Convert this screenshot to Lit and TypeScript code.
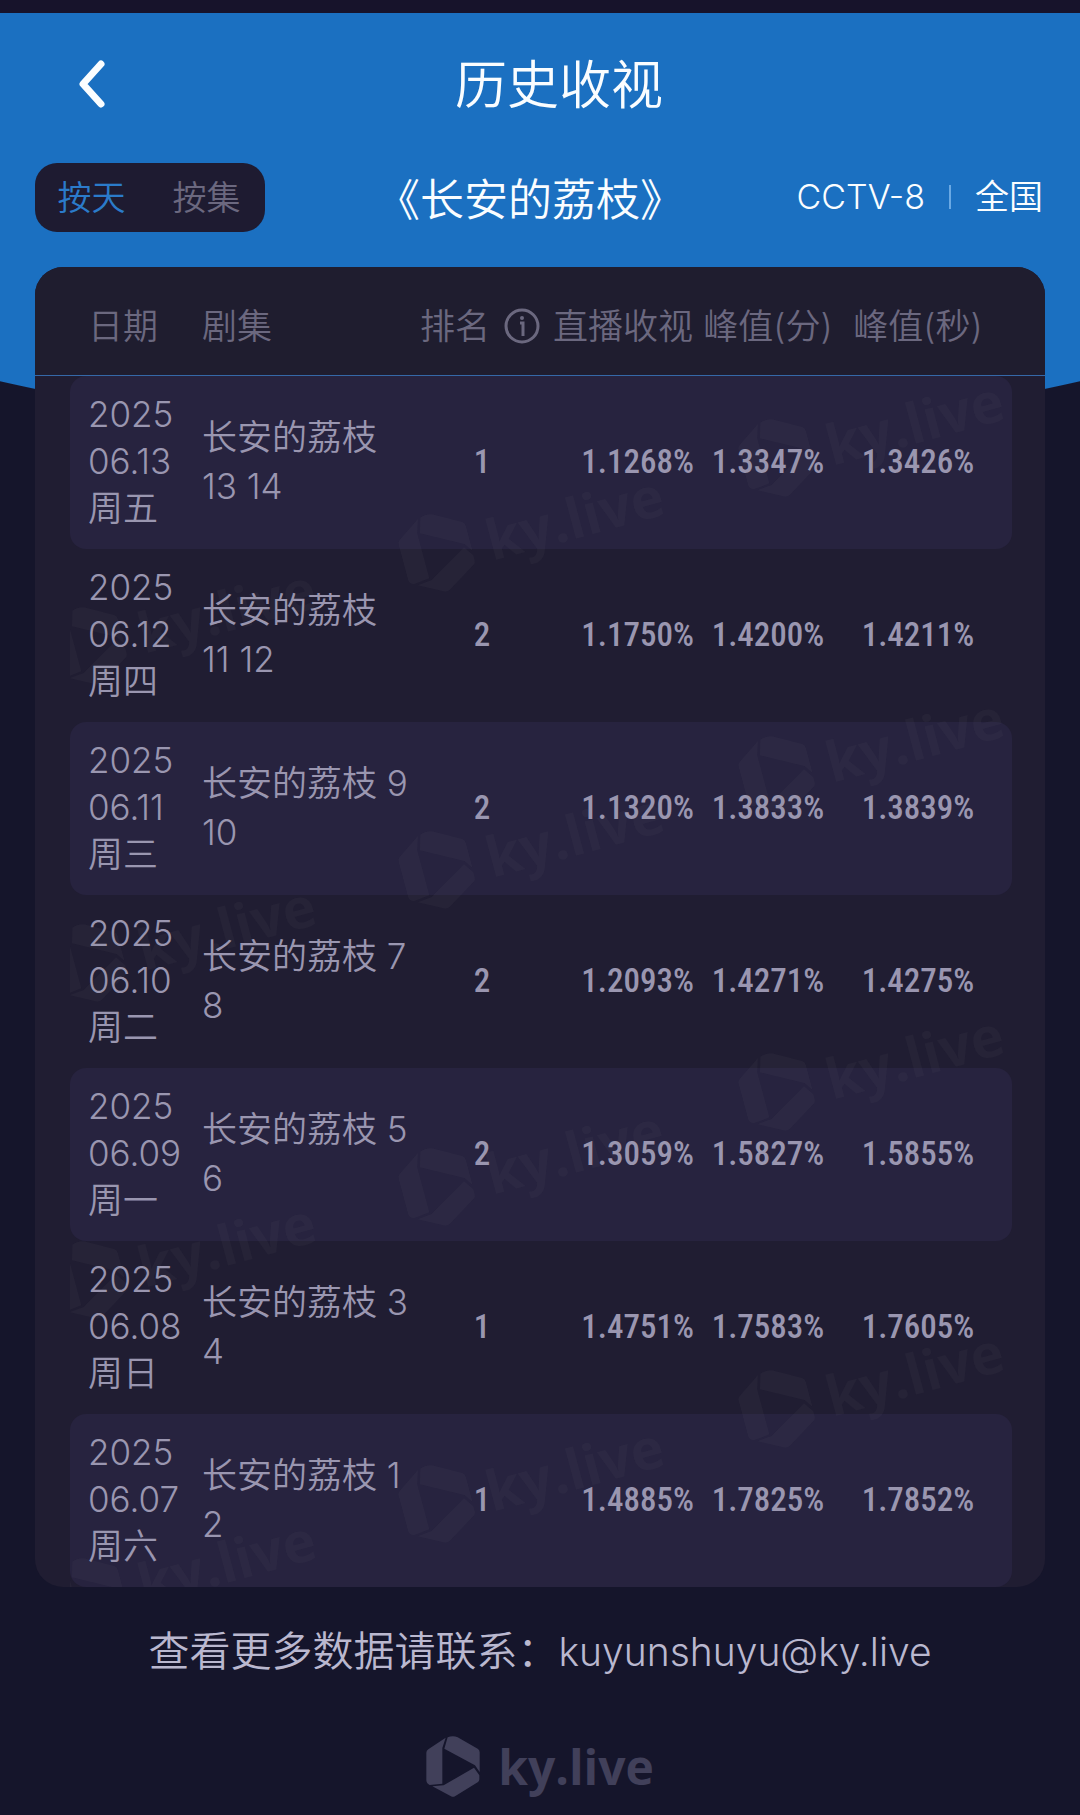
import { LitElement, html, css } from "lit";
import { customElement, property, state } from "lit/decorators.js";
import { classMap } from "lit/directives/class-map.js";
import { styleMap } from "lit/directives/style-map.js";

interface Rating {
  year: string;
  day: string;
  week: string;
  episodes: string;
  rank: number;
  live: string;
  peakMinute: string;
  peakSecond: string;
}

const RATINGS: Rating[] = [
  { year: "2025", day: "06.13", week: "周五", episodes: "13 14", rank: 1, live: "1.1268%", peakMinute: "1.3347%", peakSecond: "1.3426%" },
  { year: "2025", day: "06.12", week: "周四", episodes: "11 12", rank: 2, live: "1.1750%", peakMinute: "1.4200%", peakSecond: "1.4211%" },
  { year: "2025", day: "06.11", week: "周三", episodes: "9 10", rank: 2, live: "1.1320%", peakMinute: "1.3833%", peakSecond: "1.3839%" },
  { year: "2025", day: "06.10", week: "周二", episodes: "7 8", rank: 2, live: "1.2093%", peakMinute: "1.4271%", peakSecond: "1.4275%" },
  { year: "2025", day: "06.09", week: "周一", episodes: "5 6", rank: 2, live: "1.3059%", peakMinute: "1.5827%", peakSecond: "1.5855%" },
  { year: "2025", day: "06.08", week: "周日", episodes: "3 4", rank: 1, live: "1.4751%", peakMinute: "1.7583%", peakSecond: "1.7605%" },
  { year: "2025", day: "06.07", week: "周六", episodes: "1 2", rank: 1, live: "1.4885%", peakMinute: "1.7825%", peakSecond: "1.7852%" },
];

const MARK_STEP = 317;
const MARKS = [
  { left: 2, top: 270 },
  { left: 39, top: 177 },
  { left: 75, top: 82 },
].flatMap((m) => [0, 1, 2, 3].map((i) => ({ left: m.left, top: m.top + i * MARK_STEP })));

@customElement("ky-logo")
export class KyLogo extends LitElement {
  static styles = css`
    :host {
      display: inline-flex;
      align-items: center;
      gap: 18px;
      color: #41405a;
      font: 700 48px/60px "Open Sans", "Noto Sans", sans-serif;
    }
    .mark {
      display: block;
      width: var(--mark-width, 54px);
      height: var(--mark-height, 61px);
      fill: currentColor;
    }
  `;

  render() {
    return html`
      <svg class="mark" viewBox="0 0 160 183" aria-hidden="true">
        <path d="M6 40 58 5 48 36V143L10 147Q0 142 0 132V50Q0 44 6 40Z" />
        <path d="M64 4Q80-3 94 4L154 38Q160 42 160 49V108L146 88 54 38Z" />
        <path d="M18 151 52 148 143 95 159 118V130Q159 136 154 139L86 181Q80 184 74 181Z" />
      </svg>
      <span>ky.live</span>
    `;
  }
}

@customElement("rating-table")
export class RatingTable extends LitElement {
  @property({ attribute: false }) rows: Rating[] = [];
  @property() show = "";

  static styles = css`
    :host {
      display: block;
      position: relative;
      overflow: hidden;
      border-radius: 28px;
      background: #201d32;
      color: #9a96b0;
      font-size: 35px;
    }
    table,
    thead,
    tbody {
      display: block;
    }
    tr {
      display: grid;
      grid-template-columns: 114fr 210fr 140fr 142fr 148fr 152fr;
      align-items: center;
      padding: 0 18px;
    }
    th,
    td {
      padding: 0;
      text-align: left;
      font-weight: inherit;
    }
    thead {
      padding: 10px 33px 0 35px;
      border-bottom: 1px solid #3568a8;
      background: #1f1d2f;
      color: #6b687f;
    }
    thead tr {
      height: 98px;
    }
    thead th {
      line-height: 49px;
      white-space: nowrap;
    }
    tbody {
      padding: 0 33px 0 35px;
    }
    tbody tr {
      box-sizing: border-box;
      min-height: 173px;
      padding-bottom: 2px;
      border-radius: 16px;
    }
    tbody tr:nth-child(odd) {
      background: #27233f;
    }
    .date {
      line-height: 47px;
    }
    .date span {
      display: block;
    }
    .episodes {
      line-height: 49px;
    }
    .number {
      line-height: 49px;
      text-align: center;
    }
    td.number {
      font-family: "Roboto Condensed", "Liberation Sans Narrow", Roboto, sans-serif;
      font-size: 33px;
      font-weight: 500;
    }
    td.live {
      text-align: right;
    }
    .rank-head {
      display: flex;
      align-items: center;
      justify-content: center;
      gap: 14px;
      padding-right: 4px;
    }
    .info {
      display: flex;
      padding: 0;
      border: 0;
      background: none;
      color: inherit;
    }
    .info svg {
      width: 36px;
      height: 36px;
    }
    .watermarks {
      position: absolute;
      inset: 109px 33px 0 35px;
      overflow: hidden;
      pointer-events: none;
    }
    .watermarks ky-logo {
      --mark-width: 70px;
      --mark-height: 80px;
      position: absolute;
      gap: 16px;
      color: rgba(140, 140, 130, 0.06);
      font-size: 56px;
      transform: translate(-35px, -40px) rotate(-15deg);
      transform-origin: 35px 40px;
    }
  `;

  render() {
    return html`
      <table>
        <thead>
          <tr>
            <th scope="col">日期</th>
            <th scope="col">剧集</th>
            <th scope="col" class="number">
              <span class="rank-head">
                排名
                <button class="info" type="button" aria-label="排名">
                  <svg viewBox="0 0 36 36" fill="none" stroke="currentColor" aria-hidden="true">
                    <circle cx="18" cy="18" r="16" stroke-width="3" />
                    <circle cx="18" cy="10" r="2" fill="currentColor" stroke="none" />
                    <path d="M16 15h3v13" stroke-width="3" />
                  </svg>
                </button>
              </span>
            </th>
            <th scope="col" class="number">直播收视</th>
            <th scope="col" class="number">峰值(分)</th>
            <th scope="col" class="number">峰值(秒)</th>
          </tr>
        </thead>
        <tbody>
          ${this.rows.map(
            (r) => html`
              <tr>
                <td class="date"><span>${r.year}</span><span>${r.day}</span><span>${r.week}</span></td>
                <td class="episodes">${this.show} ${r.episodes}</td>
                <td class="number">${r.rank}</td>
                <td class="number live">${r.live}</td>
                <td class="number">${r.peakMinute}</td>
                <td class="number">${r.peakSecond}</td>
              </tr>
            `,
          )}
        </tbody>
      </table>
      <div class="watermarks" aria-hidden="true">
        ${MARKS.map(
          (m) => html`<ky-logo style=${styleMap({ left: `${m.left}%`, top: `${m.top}px` })}></ky-logo>`,
        )}
      </div>
    `;
  }
}

@customElement("app-root")
export class AppRoot extends LitElement {
  @state() private mode: "day" | "episode" = "day";

  static styles = css`
    :host {
      display: block;
      min-height: 100vh;
      box-sizing: border-box;
      border-top: 13px solid #17132b;
      background: #15152b radial-gradient(circle at 50% -2021px, #1b70c1 2449px, #15152b 2450px) no-repeat;
      color: #fafdff;
      font-family: Inter, "Noto Sans CJK SC", sans-serif;
      font-weight: 350;
    }
    .title-bar {
      display: grid;
      grid-template-columns: 38px 1fr;
      align-items: center;
      height: 142px;
      padding: 0 36px;
    }
    .back {
      width: 104px;
      height: 80px;
      padding: 0 0 0 36px;
      border: 0;
      background: none;
      color: inherit;
      text-align: left;
    }
    .back svg {
      display: block;
      width: 40px;
      height: 56px;
    }
    h1,
    h2 {
      margin: 0;
      font-weight: inherit;
      text-align: center;
      white-space: nowrap;
    }
    h1 {
      padding-top: 4px;
      font-size: 52px;
      line-height: 76px;
    }
    h2 {
      padding: 4px 20px 0 0;
      font-size: 44px;
      line-height: 64px;
    }
    .toolbar {
      display: grid;
      grid-template-columns: 1fr auto 1fr;
      align-items: center;
      height: 69px;
      margin: 8px 35px 35px;
    }
    .toggle {
      display: grid;
      grid-template-columns: 1fr 1fr;
      width: 230px;
      height: 69px;
      border-radius: 22px;
      background: #1e1b31;
    }
    .toggle button {
      padding: 0 2px 4px 0;
      border: 0;
      background: none;
      color: #6b687f;
      font: inherit;
      font-size: 34px;
    }
    .toggle .on {
      color: #2b7bca;
    }
    .scope {
      display: flex;
      align-items: center;
      justify-content: flex-end;
      gap: 24px;
      padding: 0 2px 2px 0;
      font-size: 34px;
      line-height: 50px;
      white-space: nowrap;
    }
    .divider {
      width: 2px;
      height: 24px;
      background: #6aa9e4;
    }
    rating-table {
      margin: 0 35px;
    }
    footer {
      display: flex;
      flex-direction: column;
      align-items: center;
      gap: 54px;
      padding: 34px 0 10px;
    }
    .contact {
      margin: 0;
      color: #bab8cf;
      font-size: 41px;
      line-height: 60px;
      white-space: nowrap;
    }
    .contact a {
      color: inherit;
      font-size: 39px;
      text-decoration: none;
    }
  `;

  render() {
    return html`
      <header>
        <div class="title-bar">
          <button class="back" type="button" aria-label="返回">
            <svg viewBox="0 0 40 56" fill="none" stroke="currentColor" stroke-width="7" stroke-linecap="round" stroke-linejoin="round" aria-hidden="true">
              <path d="M29 8 11 28 29 48" />
            </svg>
          </button>
          <h1>历史收视</h1>
        </div>
        <div class="toolbar">
          <div class="toggle">
            <button type="button" class=${classMap({ on: this.mode === "day" })} @click=${() => (this.mode = "day")}>按天</button>
            <button type="button" class=${classMap({ on: this.mode === "episode" })} @click=${() => (this.mode = "episode")}>按集</button>
          </div>
          <h2>《长安的荔枝》</h2>
          <div class="scope"><span>CCTV-8</span><span class="divider"></span><span>全国</span></div>
        </div>
      </header>
      <rating-table show="长安的荔枝" .rows=${RATINGS}></rating-table>
      <footer>
        <p class="contact">查看更多数据请联系：<a href="mailto:kuyunshuyu@ky.live">kuyunshuyu@ky.live</a></p>
        <ky-logo></ky-logo>
      </footer>
    `;
  }
}
